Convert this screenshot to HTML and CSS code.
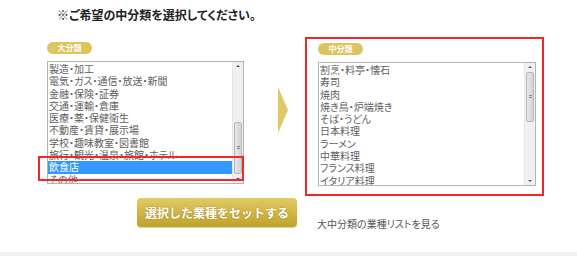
FILE: index.html
```html
<!DOCTYPE html>
<html lang="ja">
<head>
	<meta charset="UTF-8">
	<title>業種選択</title>
	<link rel="stylesheet" href="styles.css">
</head>
<body>
	<div class="page">
		<h2 class="title">※ご希望の中分類を選択してください。</h2>
		<div class="pick">
			<div class="col col-big">
				<span class="badge">大分類</span>
				<div class="listbox">
					<ul class="items">
						<li>製造・加工</li>
						<li>電気・ガス・通信・放送・新聞</li>
						<li>金融・保険・証券</li>
						<li>交通・運輸・倉庫</li>
						<li>医療・薬・保健衛生</li>
						<li>不動産・賃貸・展示場</li>
						<li>学校・趣味教室・図書館</li>
						<li>旅行・観光・温泉・旅館・ホテル</li>
						<li class="sel">飲食店</li>
						<li>その他</li>
					</ul>
					<div class="sbar">
						<span class="sbtn up"></span>
						<div class="track"><span class="thumb thumb-low"></span></div>
						<span class="sbtn down"></span>
					</div>
					<div class="mark"></div>
				</div>
			</div>
			<div class="arrow"></div>
			<div class="col col-mid">
				<span class="badge">中分類</span>
				<div class="listbox">
					<ul class="items">
						<li>割烹・料亭・懐石</li>
						<li>寿司</li>
						<li>焼肉</li>
						<li>焼き鳥・炉端焼き</li>
						<li>そば・うどん</li>
						<li>日本料理</li>
						<li>ラーメン</li>
						<li>中華料理</li>
						<li>フランス料理</li>
						<li>イタリア料理</li>
					</ul>
					<div class="sbar">
						<span class="sbtn up"></span>
						<div class="track"><span class="thumb thumb-top"></span></div>
						<span class="sbtn down"></span>
					</div>
				</div>
			</div>
		</div>
		<div class="actions">
			<button class="btn-set">選択した業種をセットする</button>
			<a class="list-link" href="#">大中分類の業種リストを見る</a>
		</div>
	</div>
	<div class="foot"></div>
</body>
</html>
```

FILE: styles.css
```css
body {
	margin: 0px;
	background: #fff;
	font-family: "Noto Sans CJK JP", "Liberation Sans", sans-serif;
	font-feature-settings: "palt";
}
.page {
	height: 252px;
}
.title {
	margin: 0px;
	padding-left: 57px;
	height: 30px;
	line-height: 30px;
	font-size: 12px;
	font-weight: bold;
	color: #222;
}
.pick {
	display: flex;
	align-items: flex-start;
	margin-top: 7px;
	padding-left: 47px;
}
.col-big {
	width: 197px;
	padding-top: 5px;
}
.badge {
	display: block;
	width: 45px;
	height: 12px;
	border-radius: 6px;
	background: #dcc55e;
	color: #fff;
	font-size: 8px;
	font-weight: bold;
	line-height: 12px;
	text-align: center;
}
.listbox {
	position: relative;
	display: flex;
	margin-top: 7px;
	height: 123px;
	border: 1px solid #b4b4b4;
	box-sizing: border-box;
	background: #fff;
}
.items {
	flex: 1;
	list-style: none;
	margin: 0px;
	padding: 1px 0px 0px 1px;
	overflow: hidden;
	font-size: 10px;
	line-height: 12.3px;
	color: #606060;
	white-space: nowrap;
}
.items li {
	height: 12.3px;
}
.items li.sel {
	background: #3399ff;
	color: #fff;
	height: 13px;
	margin-left: -1px;
	padding-left: 1px;
}
.sbar {
	display: flex;
	flex-direction: column;
	width: 10px;
	background: #f0f0f0;
	border-left: 1px solid #e6e6e6;
}
.sbtn {
	position: relative;
	height: 9px;
}
.sbtn::after {
	content: "";
	position: absolute;
	left: 3px;
	border-left: 2px solid transparent;
	border-right: 2px solid transparent;
}
.sbtn.up::after {
	top: 3px;
	border-bottom: 2px solid #555;
}
.sbtn.down::after {
	top: 4px;
	border-top: 2px solid #555;
}
.track {
	flex: 1;
	display: flex;
	flex-direction: column;
}
.thumb {
	position: relative;
	display: block;
	margin: 0px 1px;
	border: 1px solid #b8b8b8;
	border-radius: 2px;
	background: linear-gradient(to right, #e6e6e6, #d4d4d4);
}
.thumb::after {
	content: "";
	position: absolute;
	left: 2px;
	top: 50%;
	width: 3px;
	height: 4px;
	margin-top: -2px;
	background: repeating-linear-gradient(#888 0px, #888 1px, transparent 1px, transparent 2px);
}
.thumb-low {
	margin-top: auto;
	height: 50px;
}
.thumb-top {
	height: 48px;
}
.mark {
	position: absolute;
	left: -10px;
	top: 94px;
	width: 206px;
	height: 25px;
	border: 2px solid #f02828;
	box-sizing: border-box;
}
.arrow {
	width: 0px;
	height: 0px;
	margin: 50px 0px 0px 34px;
	border-left: 10px solid #e0c862;
	border-top: 23px solid transparent;
	border-bottom: 23px solid transparent;
}
.col-mid {
	width: 239px;
	height: 159px;
	margin-left: 17px;
	padding: 4px 6px 8px 11px;
	border: 2px solid #f02828;
	box-sizing: border-box;
}
.col-mid .listbox {
	margin-top: 7px;
	height: 124px;
}
.actions {
	display: flex;
	align-items: flex-start;
	margin-top: 2px;
	padding-left: 137px;
}
.btn-set {
	width: 160px;
	height: 29px;
	border: 0px;
	border-radius: 4px;
	background: linear-gradient(#e2cb64, #bfa12c);
	box-shadow: 0px 1px 1px #d8d0a8;
	color: #fff;
	font-family: inherit;
	font-size: 12px;
	font-weight: bold;
	text-shadow: 0px 0px 2px #9a8020;
	padding: 0px;
	cursor: pointer;
}
.list-link {
	margin: 20px 0px 0px 20px;
	font-size: 10px;
	line-height: 12px;
	color: #555;
	text-decoration: none;
}
.foot {
	height: 4px;
	background: #f0f0f0;
}
```
